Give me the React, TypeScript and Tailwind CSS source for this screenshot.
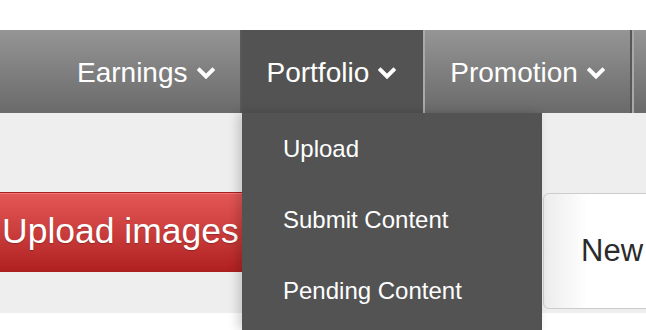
import React from "react";

const font = { fontFamily: '"Liberation Sans", Arial, sans-serif' };

function Chevron() {
  return (
    <svg width="18" height="14" viewBox="0 0 18 14" fill="none" className="shrink-0">
      <path d="M2.5 4 L9 10.5 L15.5 4" stroke="white" strokeWidth="4" strokeLinecap="square" />
    </svg>
  );
}

function NavItem({ label, active, first }: { label: string; active?: boolean; first?: boolean }) {
  const border = active
    ? "bg-[#535353] border-r-2 border-r-[#535353]"
    : "border-r-2 border-r-[#585858] " + (first ? "" : "border-l-2 border-l-[#a9a9a9]");
  return (
    <div className={"flex h-full shrink-0 items-center gap-[9px] px-[25px] pt-[3px] " + border}>
      <span className="text-[28px] leading-none text-white">{label}</span>
      <Chevron />
    </div>
  );
}

const menu = ["Upload", "Submit Content", "Pending Content"];

export default function App() {
  return (
    <div className="relative h-[330px] w-[646px] overflow-hidden bg-white" style={font}>
      <div className="h-[30px]" />
      <nav className="flex h-[83px] bg-gradient-to-b from-[#959595] to-[#6a6a6a] pl-[52px]">
        <NavItem label="Earnings" first />
        <NavItem label="Portfolio" active />
        <NavItem label="Promotion" />
        {/* next item, off screen */}
        <div className="h-full w-[60px] shrink-0 border-l-2 border-l-[#a9a9a9]" />
      </nav>

      <div className="flex h-[200px] items-start overflow-hidden bg-[#eeeeee] pt-[79px]">
        <div className="w-[543px] shrink-0">
          <button className="-ml-[16px] flex h-[80px] w-[330px] items-center rounded-md border border-[#a82020] bg-gradient-to-b from-[#e45757] to-[#b02020] pl-[17px] text-[35.5px] text-white shadow-[inset_0_1px_0_#ee7a7a] [text-shadow:0_1px_1px_rgba(0,0,0,0.25)]">
            Upload images
          </button>
        </div>
        <div className="mt-[1px] flex h-[116px] w-[220px] shrink-0 items-center rounded-md border border-[#cccccc] bg-gradient-to-r from-[#ececec] via-white via-[20%] to-white pl-[37px]">
          <span className="text-[31px] text-[#2b2b2b]">New</span>
        </div>
      </div>

      <div className="absolute left-[242px] top-[113px] h-[217px] w-[300px] bg-[#535353] shadow-[-4px_0_10px_rgba(0,0,0,0.18)]">
        {menu.map((m) => (
          <div key={m} className="flex h-[71px] items-center pl-[41px] text-[24px] text-white">
            {m}
          </div>
        ))}
      </div>
    </div>
  );
}
